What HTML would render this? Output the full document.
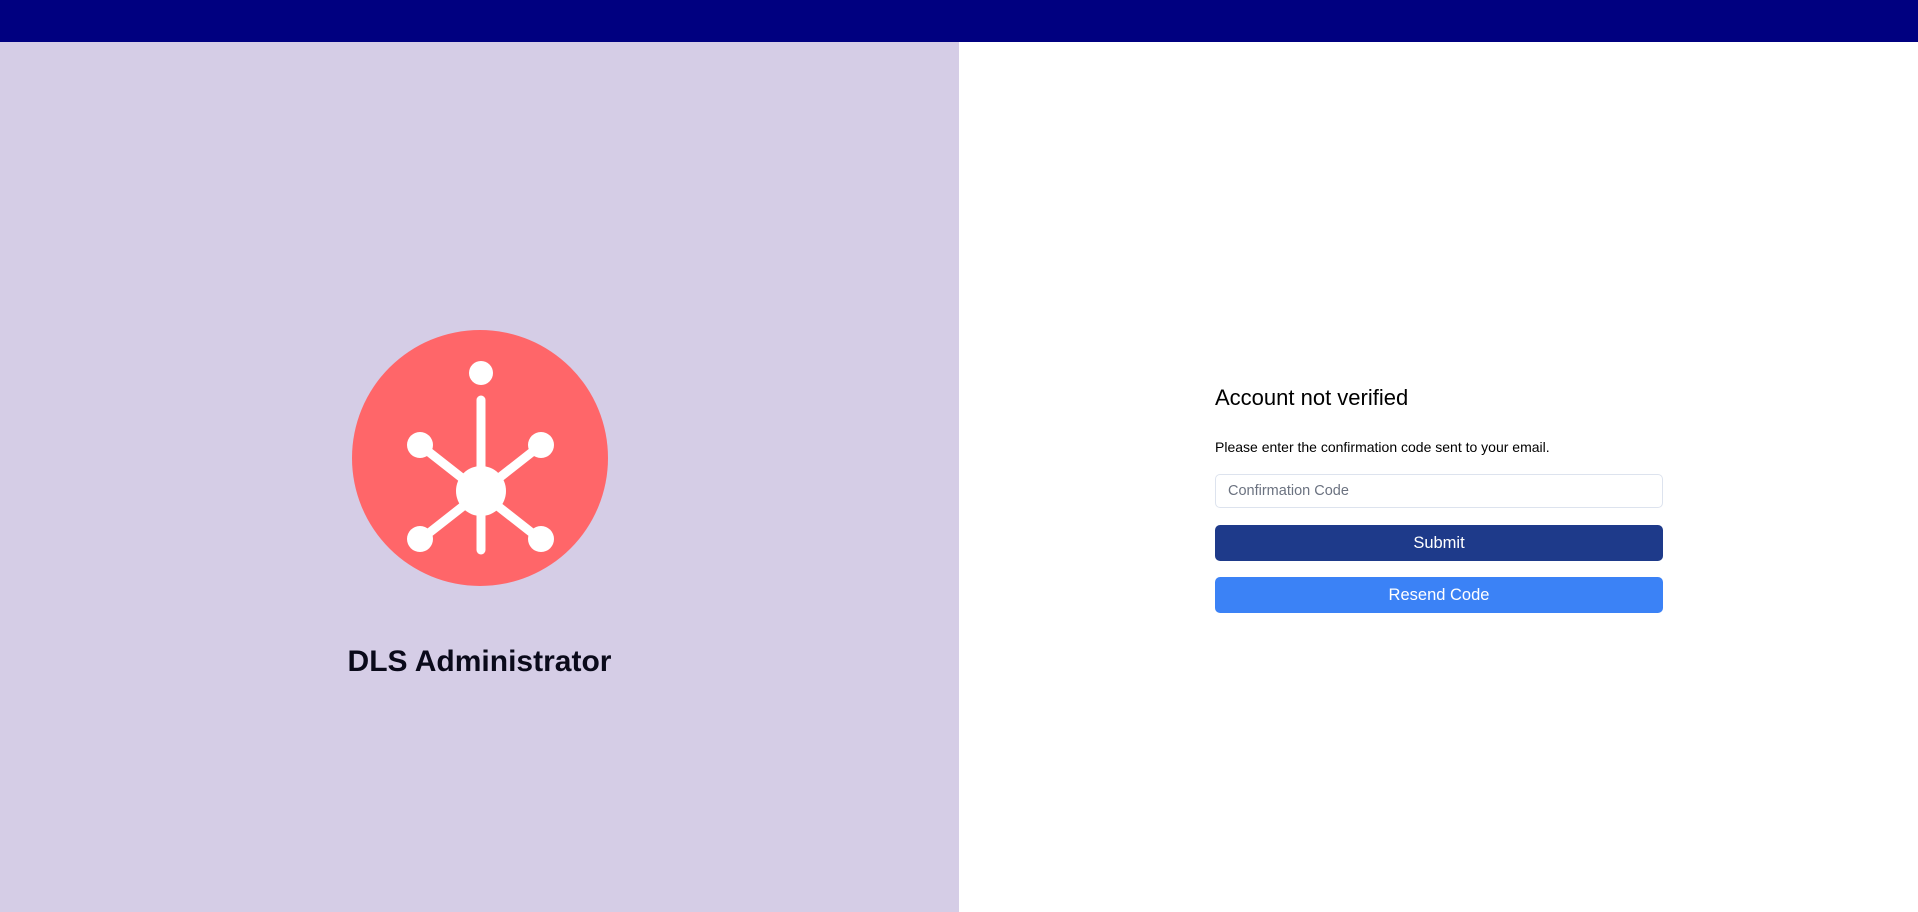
<!DOCTYPE html>
<html><head><style>
body{margin:0;width:1918px;height:912px;overflow:hidden;font-family:"Liberation Sans",Arial,sans-serif;background:#fff;position:relative}
.top{position:absolute;left:0;top:0;width:1918px;height:42px;background:#000080}
.left{position:absolute;left:0;top:42px;width:959px;height:870px;background:#d5cde6}
.title{position:absolute;left:0;width:959px;top:645px;text-align:center;font-weight:bold;font-size:30px;color:#0a0a1a}
.form{position:absolute;left:1215px;top:383px;width:448px}
h1{margin:0;font-weight:normal;font-size:22px;color:#000;line-height:30px}
p{margin:24px 0 0;font-size:14px;color:#000;line-height:20px}
.inp{margin-top:17px;height:34px;box-sizing:border-box;border:1px solid #dde3ee;border-radius:5px;padding-left:12px;font-size:14.5px;color:#6b7280;line-height:32px}
.btn{height:36px;border-radius:5px;color:#fff;text-align:center;font-size:16.5px;line-height:36px}
</style></head><body>
<div class="top"></div>
<div class="left"></div>
<svg style="position:absolute;left:0;top:0" width="959" height="912">
<circle cx="480" cy="458" r="128" fill="#ff6669"/>
<g stroke="#fff" stroke-width="9" stroke-linecap="round" fill="#fff">
<line x1="481" y1="400" x2="481" y2="550"/>
<line x1="420" y1="445" x2="541" y2="540"/>
<line x1="541" y1="445" x2="420" y2="540"/>
</g>
<g fill="#fff">
<circle cx="481" cy="373" r="12"/>
<circle cx="481" cy="491" r="25"/>
<circle cx="420" cy="445" r="13"/>
<circle cx="541" cy="445" r="13"/>
<circle cx="420" cy="539" r="13"/>
<circle cx="541" cy="539" r="13"/>
</g>
</svg>
<div class="title">DLS Administrator</div>
<div class="form">
<h1>Account not verified</h1>
<p>Please enter the confirmation code sent to your email.</p>
<div class="inp">Confirmation Code</div>
<div class="btn" style="background:#1e3a8a;margin-top:17px">Submit</div>
<div class="btn" style="background:#3b82f6;margin-top:16px">Resend Code</div>
</div>
</body></html>
